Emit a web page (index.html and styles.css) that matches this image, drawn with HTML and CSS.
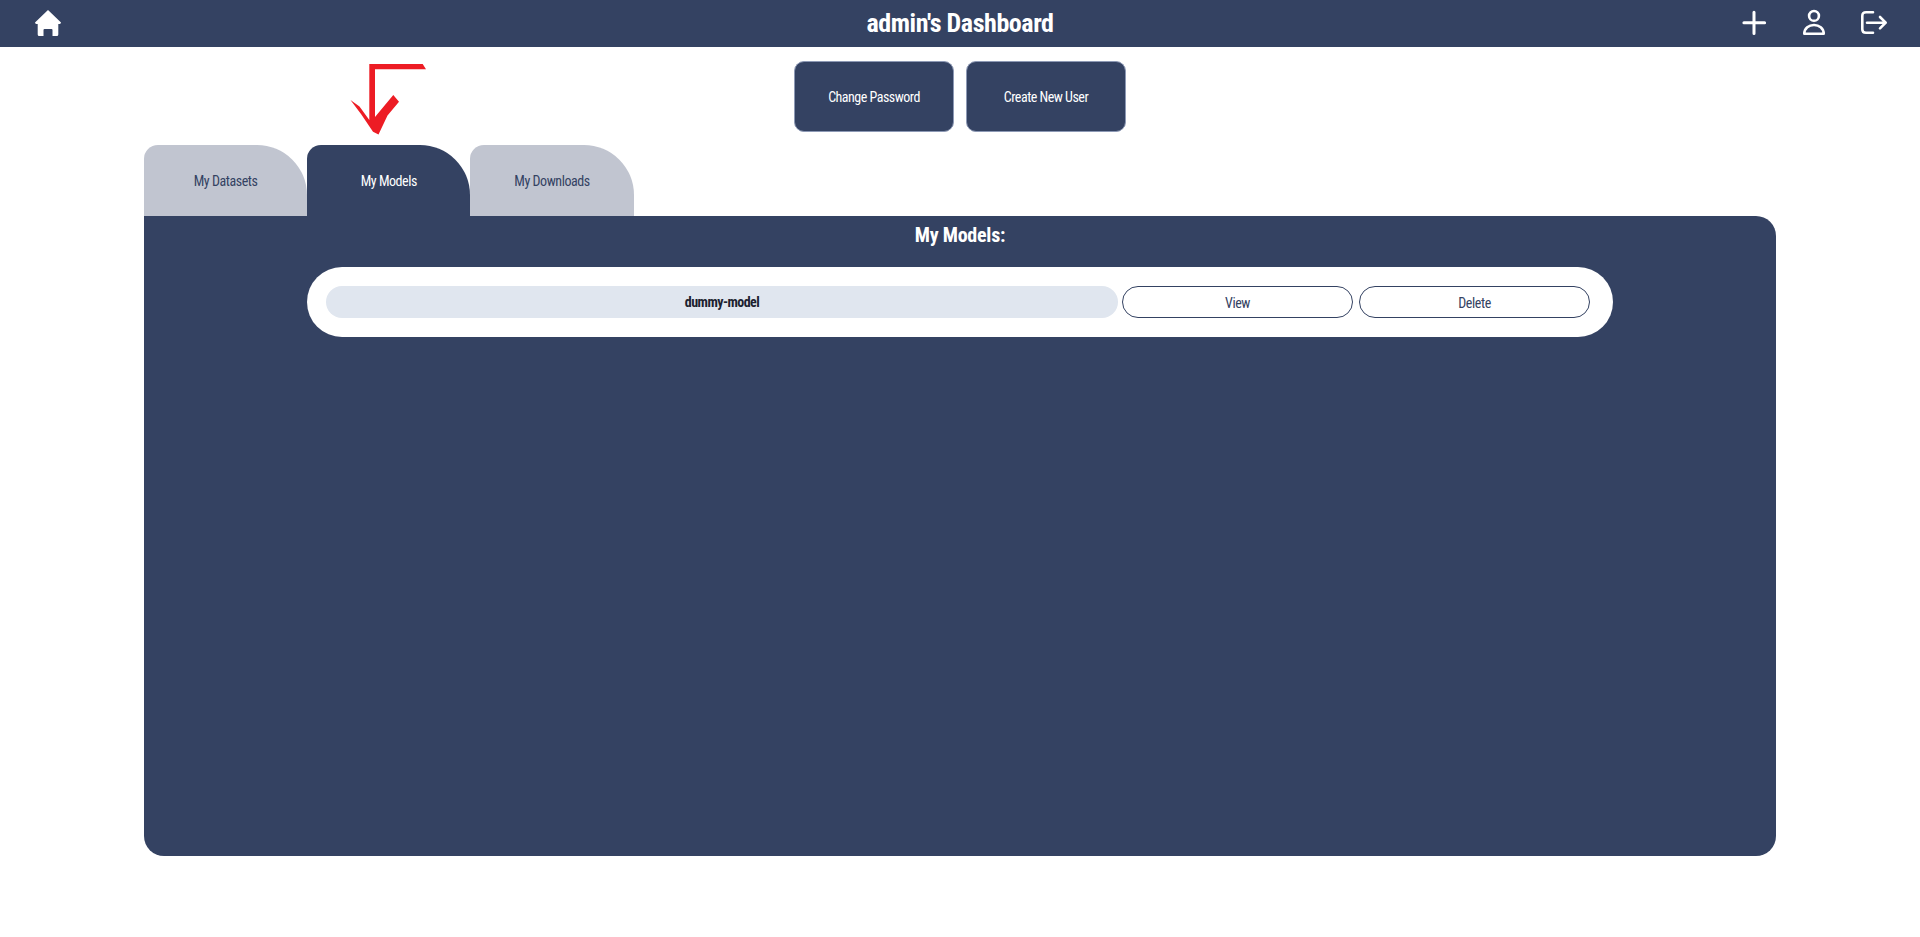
FILE: index.html
```html
<!DOCTYPE html>
<html lang="en">
<head>
<meta charset="utf-8">
<title>admin's Dashboard</title>
<link rel="stylesheet" href="styles.css">
</head>
<body>
<header class="topbar">
  <a class="home-link" aria-label="Home">
    <svg class="icon-home" viewBox="0 0 26 26"><path d="M13 0 L26 12.6 Q26 14 24.6 14 L23.3 14 L23.3 24.5 Q23.3 26 21.8 26 L17.5 26 L17.5 20 Q17.5 19 16.5 19 L9.5 19 Q8.5 19 8.5 20 L8.5 26 L4.2 26 Q2.7 26 2.7 24.5 L2.7 14 L1.4 14 Q0 14 0 12.6 Z" fill="#fff"/></svg>
  </a>
  <h1 class="title">admin's Dashboard</h1>
  <nav class="top-actions">
    <svg class="icon" viewBox="0 0 26 26"><path d="M13 2.2 V23.4 M2.9 12.8 H23.6" fill="none" stroke="#fff" stroke-width="3" stroke-linecap="round"/></svg>
    <svg class="icon" viewBox="0 0 26 26"><g fill="none" stroke="#fff" stroke-width="2.6"><circle cx="13" cy="5.9" r="4.9"/><path d="M3.3 23.8 C3.3 18 8 15 13 15 S22.7 18 22.7 23.8 Z" stroke-linejoin="round"/></g></svg>
    <svg class="icon" viewBox="0 0 26 26"><g fill="none" stroke="#fff" stroke-width="2.6" stroke-linecap="round" stroke-linejoin="round"><path d="M12 2.2 H5 Q1.3 2.2 1.3 5.9 V19.2 Q1.3 22.8 5 22.8 H12"/><path d="M6 12.7 H24.7 M19 7 L24.7 12.7 L19 18.4"/></g></svg>
  </nav>
</header>
<main class="page">
  <div class="account-actions">
    <button class="account-btn">Change Password</button>
    <button class="account-btn">Create New User</button>
  </div>
  <svg class="annotation" viewBox="0 0 85 75"><path d="M24.3 4 H77.7 L81 9.3 H30 V57 L48.3 35 L54 41.7 L42.5 55.5 L33.5 74.5 L28 71.7 L16 54 L5.5 40 L14.5 46.5 L24.3 60 Z" fill="#ed1c24"/></svg>
  <div class="tabs">
    <button class="tab">My Datasets</button>
    <button class="tab active">My Models</button>
    <button class="tab">My Downloads</button>
  </div>
  <section class="panel">
    <h2 class="panel-title">My Models:</h2>
    <div class="model-row">
      <div class="model-name">dummy-model</div>
      <button class="pill">View</button>
      <button class="pill">Delete</button>
    </div>
  </section>
</main>
</body>
</html>
```
FILE: styles.css
```css
* { box-sizing: border-box; }
html, body { margin: 0; padding: 0; height: 100%; background: #fff; }
body { font-family: Roboto, "Liberation Sans", sans-serif; font-stretch: 75%; color: #344262; overflow: hidden; }
button { font: inherit; font-stretch: 75%; cursor: pointer; }

.topbar { height: 47px; background: #344262; display: flex; align-items: center; justify-content: space-between; position: relative; padding: 0 33px 1px 35px; }
.home-link { display: flex; }
.icon-home { width: 26px; height: 26px; display: block; }
.title { position: absolute; left: 0; right: 0; top: 0; margin: 0; line-height: 47px; text-align: center; color: #fff; font-size: 26px; font-weight: 700; letter-spacing: -0.43px; pointer-events: none; }
.top-actions { display: flex; gap: 34px; }
.icon { width: 26px; height: 26px; display: block; overflow: visible; }

.page { position: relative; }
.account-actions { display: flex; justify-content: center; gap: 12px; padding-top: 14px; }
.account-btn { width: 160px; height: 71px; background: #344262; color: #fff; border: 1px solid #8d99b5; border-radius: 10px; font-size: 14px; font-weight: 400; letter-spacing: -0.5px; padding: 1px 0 0; }
.annotation { position: absolute; left: 345px; top: 13px; width: 85px; height: 75px; overflow: visible; }

.tabs { display: flex; margin: 13px 0 0 144px; }
.tab { width: 163.2px; height: 71px; border: 0; background: #c1c5d0; color: #344262; font-size: 14px; letter-spacing: -0.45px; border-radius: 14px 50px 0 0; padding: 0; }
.tab.active { background: #344262; color: #fff; }

.panel { width: 1632px; height: 640px; margin-left: 144px; background: #344262; border-radius: 0 20px 20px 20px; padding-top: 7px; }
.panel-title { margin: 0; text-align: center; color: #fff; font-size: 20px; line-height: 24px; font-weight: 700; letter-spacing: -0.24px; }
.model-row { width: 1306px; height: 70px; margin: 20px auto 0; background: #fff; border-radius: 35px; display: flex; align-items: center; padding: 0 19px; gap: 6px; }
.model-name { width: 792px; height: 32px; line-height: 32px; margin-right: -2px; text-align: center; background: #e0e6ef; border-radius: 16px; color: #1c2230; font-size: 14px; font-weight: 700; letter-spacing: -0.55px; }
.pill { width: 231px; height: 32px; background: #fff; color: #344262; border: 1px solid #344262; border-radius: 16px; font-size: 14px; letter-spacing: -0.4px; padding: 2px 0 0; }
```
